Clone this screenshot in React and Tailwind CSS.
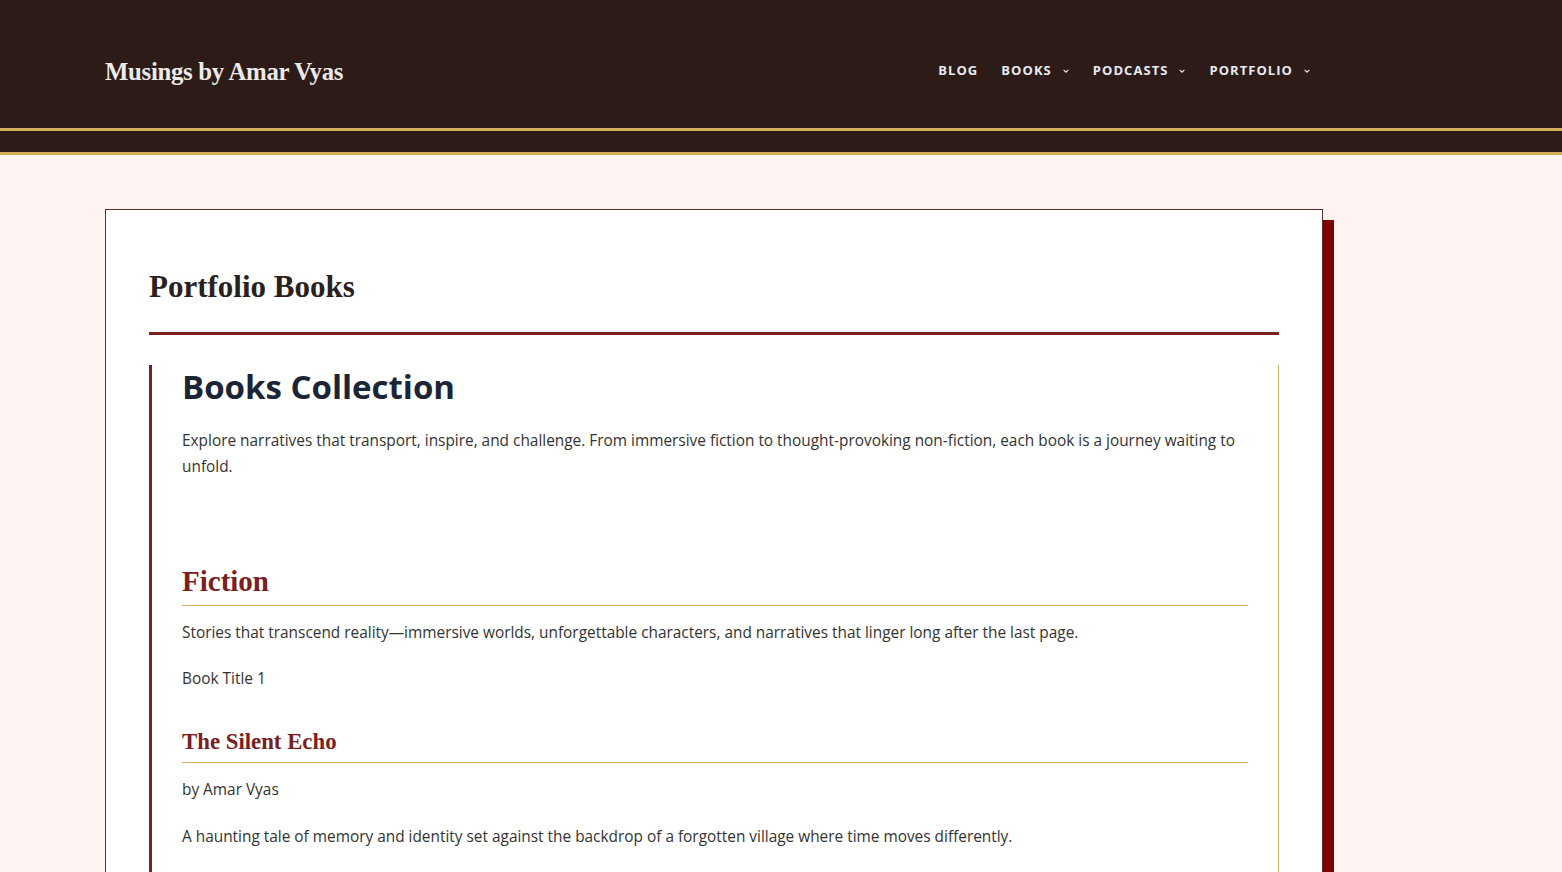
const serif = { fontFamily: '"Liberation Serif", "DejaVu Serif", serif' };
const sans = { fontFamily: '"Open Sans", "DejaVu Sans", sans-serif' };

function Chevron() {
  return (
    <svg className="ml-[10px] h-[8px] w-[8px]" viewBox="0 0 10 10" fill="none" stroke="currentColor" strokeWidth="1.4">
      <path d="M2 3.5l3 3 3-3" />
    </svg>
  );
}

const nav = [
  { label: 'Blog' },
  { label: 'Books', menu: true },
  { label: 'Podcasts', menu: true },
  { label: 'Portfolio', menu: true },
];

export default function App() {
  return (
    <div className="min-h-screen bg-[#fff4f1]" style={sans}>
      <header className="bg-[#2c1b17]">
        <div className="flex h-[128px] items-center justify-between pl-[105px] pr-[251px] pt-[16px]">
          <a href="#" className="text-[24.8px] font-bold tracking-[-0.3px] text-[#eceae8]" style={serif}>Musings by Amar Vyas</a>
          <nav className="flex items-center gap-[23px] pb-[2px]">
            {nav.map(n => (
              <a key={n.label} href="#" className="flex items-center text-[13px] font-bold uppercase tracking-[1.05px] text-[#e8e9f2]">
                {n.label}
                {n.menu && <Chevron />}
              </a>
            ))}
          </nav>
        </div>
        <div className="h-[3px] bg-[#d4ae56]" />
        <div className="h-[21px]" />
        <div className="h-[3px] bg-[#d4ae56]" />
      </header>

      <main className="px-[105px] pt-[54px]">
        <article className="w-[1218px] border border-[#6b2a2a] bg-white px-[43px] pt-[57px] shadow-[11px_11px_0_0_#800000]">
          <h1 className="text-[31px] font-bold leading-[40px] text-[#2a211e]" style={serif}>Portfolio Books</h1>
          <div className="mt-[25px] h-[3px] bg-[#7a2020]" />

          <section className="mt-[30px] border-l-[3px] border-r border-l-[#7a2020] border-r-[#d4ae56] px-[30px] pb-[40px]">
            <h2 className="pt-[1px] text-[33px] font-bold leading-[42px] text-[#1c2536]">Books Collection</h2>
            <p className="mt-[20px] text-[15.4px] leading-[26px] text-[#333]">
              Explore narratives that transport, inspire, and challenge. From immersive fiction to thought-provoking non-fiction, each book is a journey waiting to unfold.
            </p>

            <h3 className="mt-[83px] border-b border-b-[#cdb060] pb-[6px] text-[29px] font-bold leading-[36px] text-[#7a2020]" style={serif}>Fiction</h3>
            <p className="mt-[16px] text-[15.4px] leading-[22px] text-[#333]">
              Stories that transcend reality—immersive worlds, unforgettable characters, and narratives that linger long after the last page.
            </p>
            <p className="mt-[24px] text-[15.4px] leading-[22px] text-[#333]">Book Title 1</p>

            <h4 className="mt-[37px] border-b border-b-[#cdb060] pb-[5px] text-[22.8px] font-bold leading-[30px] text-[#7a2020]" style={serif}>The Silent Echo</h4>
            <p className="mt-[16px] text-[15.4px] leading-[22px] text-[#333]">by Amar Vyas</p>
            <p className="mt-[25px] text-[15.4px] leading-[22px] text-[#333]">
              A haunting tale of memory and identity set against the backdrop of a forgotten village where time moves differently.
            </p>
          </section>
        </article>
      </main>
    </div>
  );
}
